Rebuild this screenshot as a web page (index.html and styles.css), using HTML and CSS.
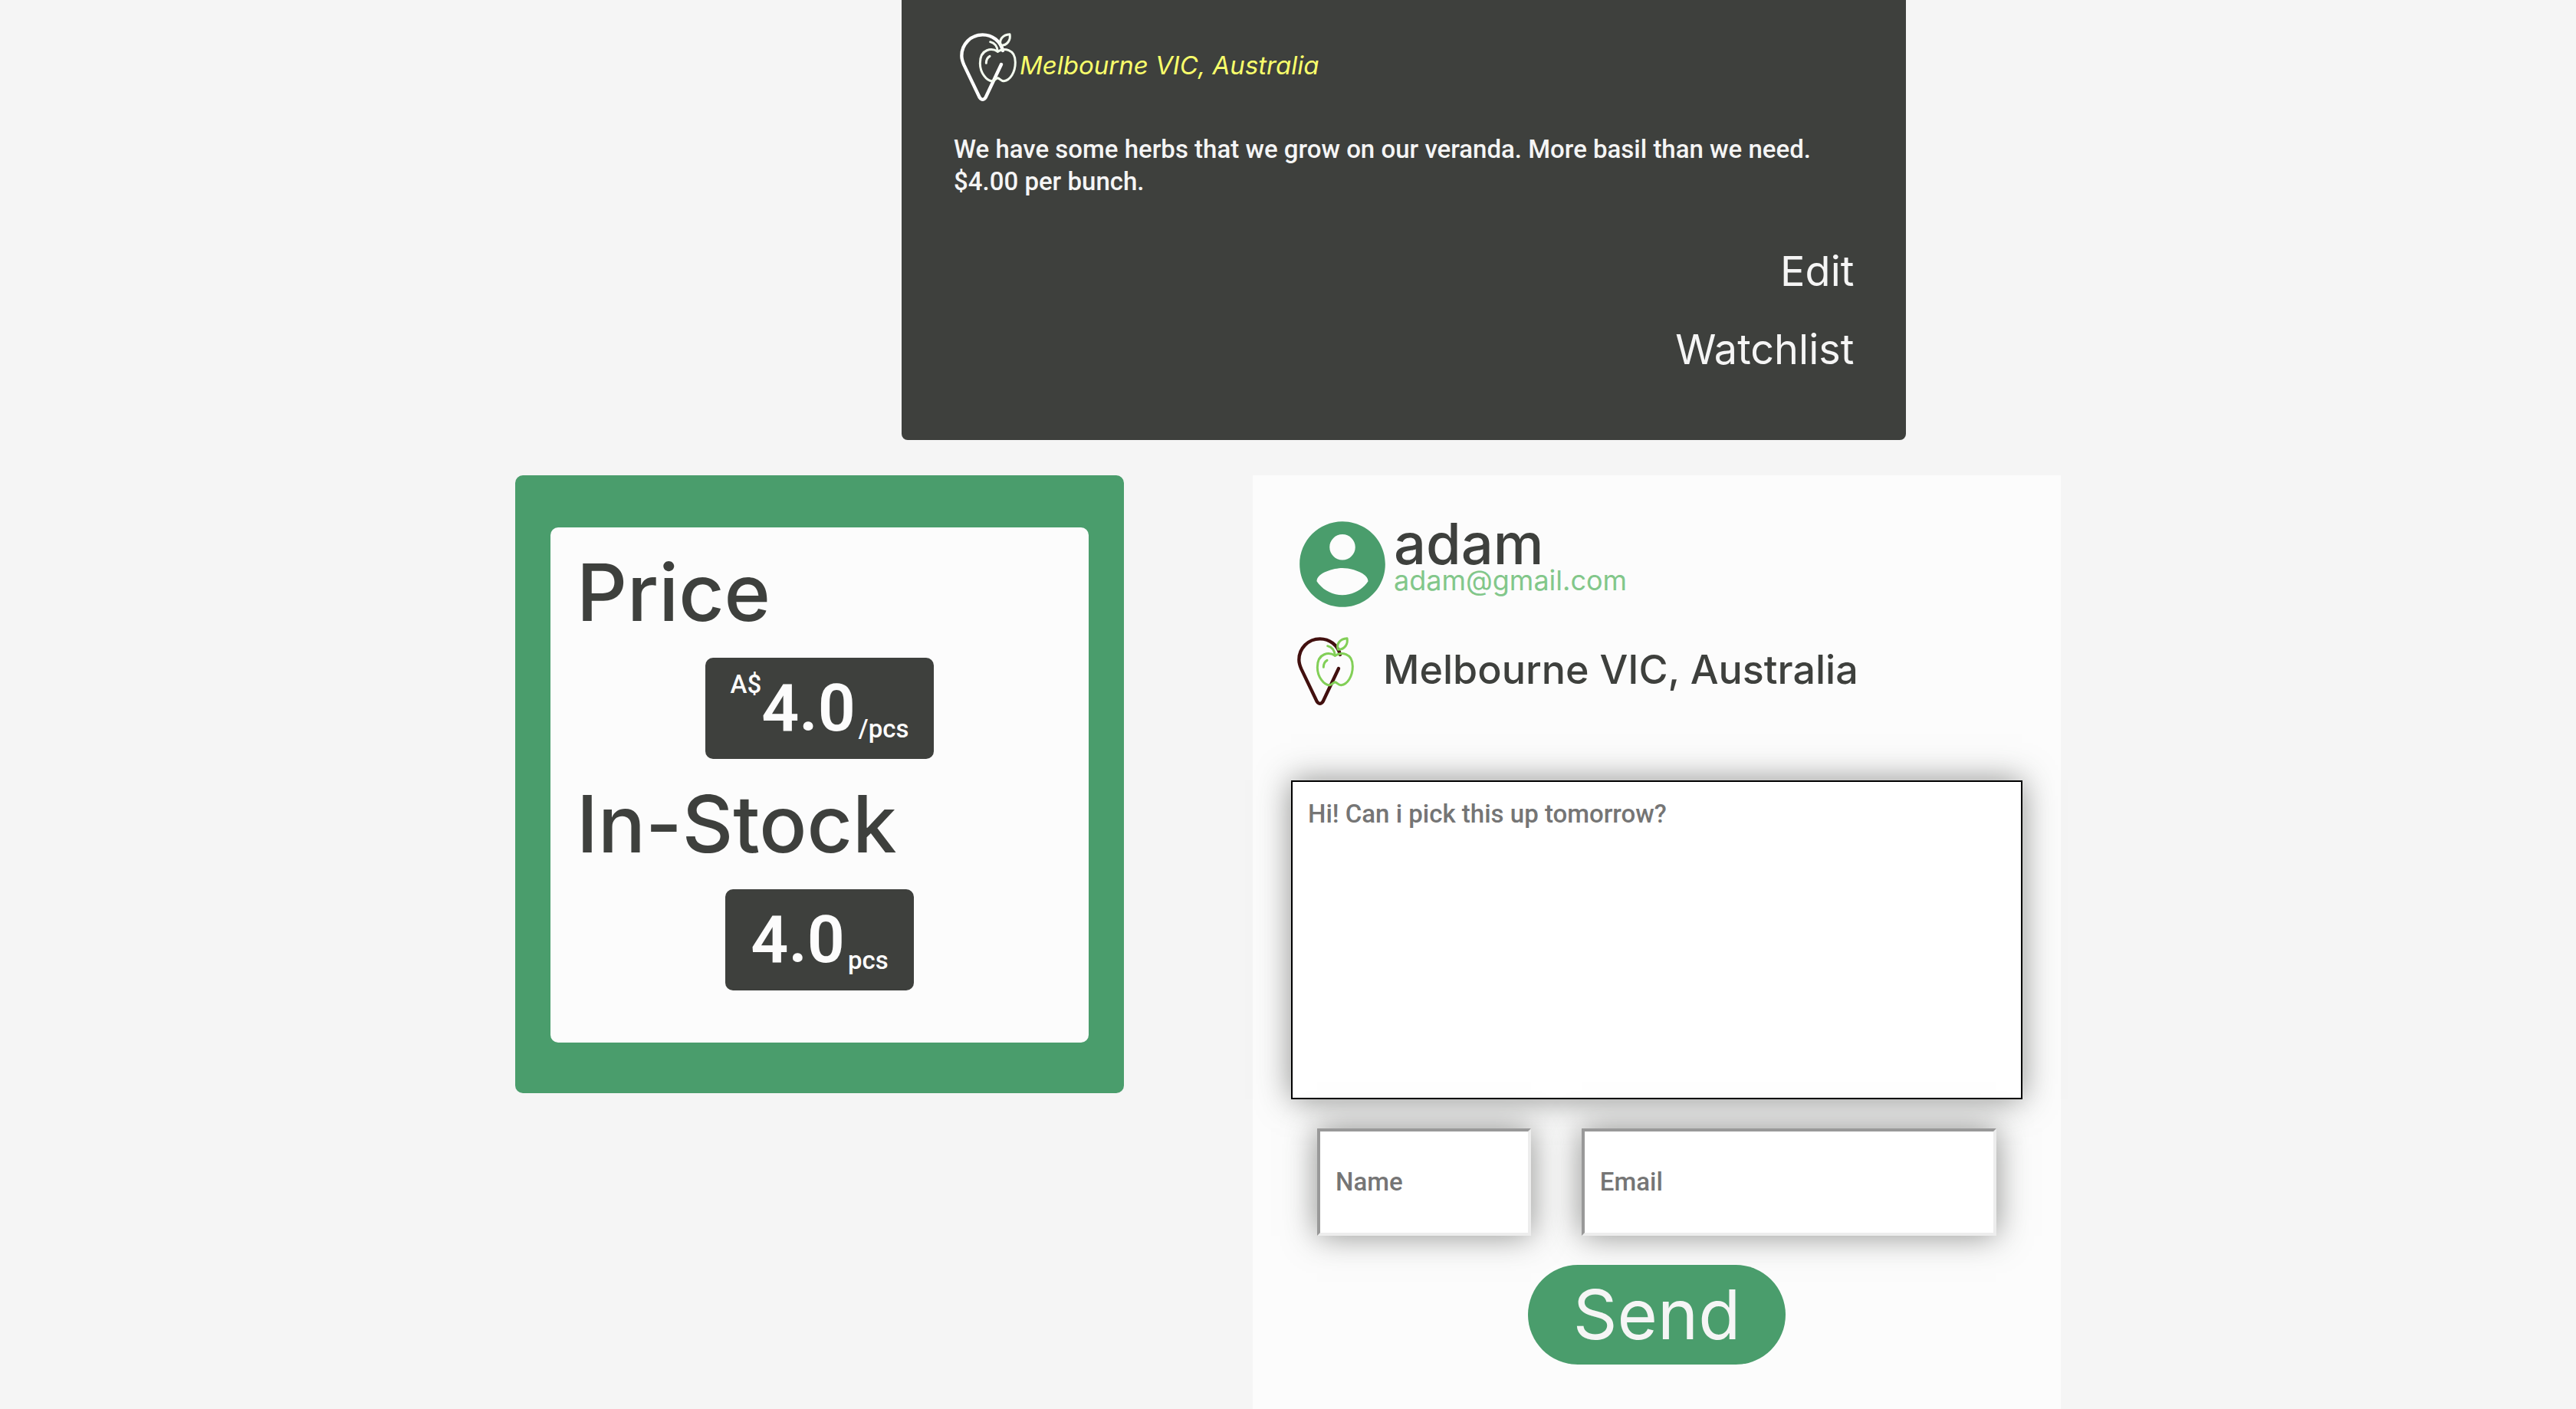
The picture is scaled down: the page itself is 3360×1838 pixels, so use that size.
FILE: index.html
```html
<!DOCTYPE html>
<html lang="en">
<head>
<meta charset="utf-8">
<title>Herbs – Melbourne VIC, Australia</title>
<link rel="stylesheet" href="styles.css">
</head>
<body>
<svg class="sprite" aria-hidden="true">
  <symbol id="pin" viewBox="12 0 258 330">
    <g fill="none" stroke-linecap="round" stroke-linejoin="round">
      <path class="pin-outline" stroke-width="13" d="M204 108C195 71 163 46 125 46C79 46 43 83 43 128C43 142 47 152 52 164L113 291Q125 308 137 291L198 162"/>
      <g class="pin-fruit" stroke-width="9">
        <path d="M184 112C163 98 115 98 115 158C115 194 141 229 164 227C173 226 177 216 184 215C191 216 197 228 208 227C233 225 253 192 253 154C253 100 207 97 184 112Z"/>
        <path d="M155 74Q182 81 184 112"/>
        <path d="M196 88C188 66 203 46 231 44C236 66 222 88 196 88Z"/>
        <path d="M153 130Q139 138 139 157"/>
      </g>
    </g>
  </symbol>
</svg>
<main class="page">
  <section class="summary">
    <div class="place">
      <svg class="pin" aria-hidden="true"><use href="#pin"/></svg>
      <em class="place-name">Melbourne VIC, Australia</em>
    </div>
    <p class="description">We have some herbs that we grow on our veranda. More basil than we need. $4.00 per bunch.</p>
    <nav class="actions">
      <a href="#edit">Edit</a>
      <a href="#watchlist">Watchlist</a>
    </nav>
  </section>
  <div class="columns">
    <section class="offer">
      <div class="offer-body">
        <h2>Price</h2>
        <p class="amount"><span class="currency">A$</span><strong>4.0</strong><span class="unit">/pcs</span></p>
        <h2>In-Stock</h2>
        <p class="amount"><strong>4.0</strong><span class="unit">pcs</span></p>
      </div>
    </section>
    <section class="contact">
      <div class="seller">
        <svg class="avatar" viewBox="0 0 24 24" aria-hidden="true"><path d="M12 2C6.480 2 2 6.480 2 12s4.480 10 10 10 10-4.480 10-10S17.520 2 12 2zm0 3c1.660 0 3 1.340 3 3s-1.340 3-3 3-3-1.340-3-3 1.340-3 3-3zm0 14.200c-2.500 0-4.710-1.280-6-3.220.030-1.990 4-3.080 6-3.080 1.990 0 5.970 1.090 6 3.080-1.290 1.940-3.500 3.220-6 3.220z"/></svg>
        <div class="seller-text">
          <h2 class="seller-name">adam</h2>
          <a class="seller-email" href="mailto:adam@gmail.com">adam@gmail.com</a>
        </div>
      </div>
      <div class="location">
        <svg class="pin pin-color" aria-hidden="true"><use href="#pin"/></svg>
        <span>Melbourne VIC, Australia</span>
      </div>
      <form class="message">
        <textarea aria-label="Message" placeholder="Hi! Can i pick this up tomorrow?"></textarea>
        <div class="fields">
          <input type="text" aria-label="Name" placeholder="Name">
          <input type="email" aria-label="Email" placeholder="Email">
        </div>
        <button type="submit">Send</button>
      </form>
    </section>
  </div>
</main>
</body>
</html>
```
FILE: styles.css
```css
* {
  box-sizing: border-box;
}

body {
  margin: 0;
  background: #f5f5f5;
  color: #3e403d;
  font-family: Roboto, "Liberation Sans", sans-serif;
  font-size: 33px;
}

h2,
p {
  margin: 0;
}

a {
  text-decoration: none;
}

.sprite {
  display: none;
}

.page {
  display: flex;
  flex-direction: column;
  gap: 46px;
  min-height: 100vh;
}

/* Listing summary */
.summary {
  width: 39%;
  margin-left: 35%;
  padding: 30px 68px 88px;
  border-radius: 0 0 8px 8px;
  background: #3e403d;
  color: #f5f5f5;
}

.place {
  display: flex;
  align-items: center;
}

.pin {
  flex: none;
  width: 86px;
  height: 110px;
  --outline: #fff;
  --fruit: #f4fcf0;
}

.pin-color {
  --outline: #42100f;
  --fruit: #82cf57;
}

.pin-outline {
  stroke: var(--outline);
}

.pin-fruit {
  stroke: var(--fruit);
}

.place-name {
  color: #f9ff6b;
  font-family: Inter, sans-serif;
  font-size: 33px;
}

.description {
  margin-top: 34px;
  font-weight: 500;
  line-height: 42px;
}

.actions {
  display: flex;
  flex-direction: column;
  align-items: flex-end;
  gap: 42px;
  margin-top: 66px;
}

.actions a {
  color: inherit;
  font-family: Inter, sans-serif;
  font-size: 54px;
  line-height: 60px;
}

/* Price panel and contact panel */
.columns {
  display: grid;
  flex: 1;
  grid-template-columns: 397fr 527fr;
  align-items: start;
  gap: 168px;
  width: 60%;
  margin: 0 auto;
}

.offer {
  padding: 68px 46px 66px;
  border-radius: 10px;
  background: #4a9d6c;
}

.offer-body {
  display: flex;
  flex-direction: column;
  align-items: center;
  gap: 25px;
  padding: 25px 34px 68px;
  border-radius: 10px;
  background: #fcfcfc;
}

.offer-body h2 {
  align-self: flex-start;
  font-family: Inter, sans-serif;
  font-size: 103px;
  font-weight: 500;
  line-height: 120px;
}

.amount {
  display: flex;
  height: 132px;
  padding: 0 33px;
  border-radius: 10px;
  background: #3e403d;
  color: #fcfcfc;
  font-weight: 500;
  line-height: 40px;
}

.amount strong {
  font-size: 86px;
  font-weight: 600;
  line-height: 132px;
}

.currency {
  padding-top: 15px;
}

.unit {
  align-self: flex-end;
  padding: 0 0 19px 4px;
}

.contact {
  align-self: stretch;
  padding: 49px 50px 58px;
  background: #fcfcfc;
}

.seller,
.location {
  display: flex;
}

.avatar {
  flex: none;
  width: 134px;
  height: 134px;
  fill: #4a9d6c;
}

.seller-text {
  padding-top: 6px;
  font-family: Inter, sans-serif;
}

.seller-name {
  font-size: 74px;
  font-weight: 500;
  line-height: 68px;
}

.seller-email {
  display: block;
  color: #82c78a;
  font-size: 36px;
  line-height: 28px;
}

.location {
  align-items: center;
  gap: 34px;
  margin-top: 15px;
  font-family: Inter, sans-serif;
  font-size: 52px;
  font-weight: 500;
}

.message {
  display: flex;
  flex-direction: column;
  gap: 38px;
  margin-top: 90px;
}

.message textarea,
.message input {
  width: 100%;
  background: #fff;
  box-shadow: 0 0 40px rgba(62, 64, 61, 0.58);
  color: #3e403d;
  font: 500 33px Roboto, "Liberation Sans", sans-serif;
}

.message ::placeholder {
  color: #757575;
  opacity: 1;
}

.message textarea {
  display: block;
  height: 416px;
  padding: 20px;
  border: 2px solid #000;
  border-radius: 0;
  line-height: 44px;
  resize: none;
}

.fields {
  display: grid;
  grid-template-columns: 34fr 66fr;
  gap: 66px;
  padding: 0 34px;
}

.message input {
  height: 140px;
  padding: 0 20px 2px;
  border: 4px solid;
  border-color: #999 #ededed #ededed #999;
  border-radius: 0;
}

.message button {
  align-self: center;
  height: 130px;
  padding: 0 59px;
  border: 0;
  border-radius: 65px;
  background: #4a9d6c;
  color: #f5f5f5;
  font-family: Inter, sans-serif;
  font-size: 90px;
  line-height: 130px;
}
```
